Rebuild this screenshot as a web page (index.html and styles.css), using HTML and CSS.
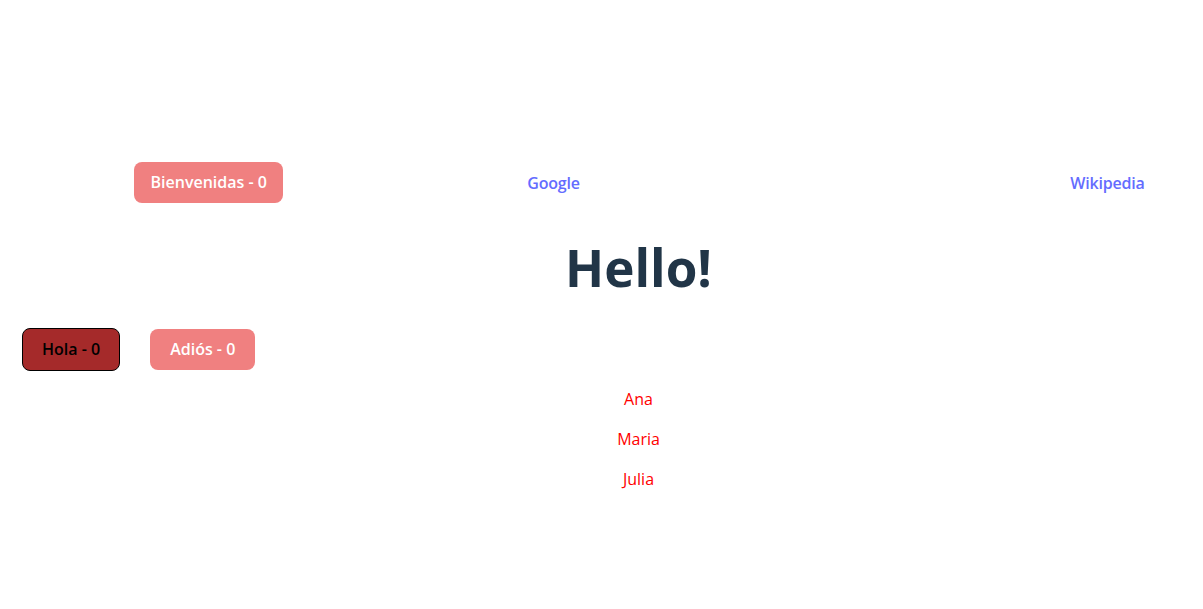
FILE: index.html
```html
<!DOCTYPE html>
<html lang="es">
<head>
<meta charset="utf-8">
<title>Hello</title>
<link rel="stylesheet" href="styles.css">
</head>
<body>
<div class="app">
  <nav class="nav">
    <div class="nav-left"><button class="btn btn-pink btn-wide">Bienvenidas - 0</button></div>
    <a class="nav-link" href="#">Google</a>
    <div class="nav-spacer"></div>
    <a class="nav-link" href="#">Wikipedia</a>
  </nav>
  <h1 class="title">Hello!</h1>
  <div class="actions">
    <button class="btn btn-brown">Hola - 0</button>
    <button class="btn btn-pink">Adiós - 0</button>
  </div>
  <div class="names">
    <p class="name">Ana</p>
    <p class="name">Maria</p>
    <p class="name">Julia</p>
  </div>
</div>
</body>
</html>
```

FILE: styles.css
```css
html, body {
  margin: 0;
  padding: 0;
  background: #ffffff;
}

body {
  font-family: "Open Sans", "Noto Sans", sans-serif;
  font-size: 16px;
  line-height: 1.5;
  color: #213547;
}

.app {
  padding-top: 162px;
}

.nav {
  display: grid;
  grid-template-columns: 134px 359.5px 120px 434px 120px;
  height: 41px;
  align-items: center;
}

.nav-left {
  grid-column: 2;
  display: flex;
}

.nav-link {
  color: #646cff;
  font-weight: 600;
  text-decoration: none;
  text-align: center;
  letter-spacing: -0.2px;
}

.btn {
  font-family: inherit;
  font-size: 16px;
  font-weight: 600;
  line-height: 21px;
  padding: 9px 19px;
  border-radius: 8px;
  border: 1px solid transparent;
  cursor: pointer;
}

.btn-wide {
  padding-left: 15.5px;
  padding-right: 15.5px;
}

.btn-pink {
  background: #f08080;
  color: #ffffff;
}

.btn-brown {
  background: #a52a2a;
  color: #000000;
  border-color: #000000;
  padding-top: 10px;
  padding-bottom: 10px;
}

.title {
  margin: 36px 0 0;
  padding-left: 74px;
  text-align: center;
  font-size: 51.2px;
  line-height: 1.1;
  font-weight: 700;
  color: #213547;
}

.actions {
  display: flex;
  gap: 30px;
  margin-top: 33px;
  padding-left: 22px;
  align-items: center;
}

.names {
  margin-top: 16px;
  padding-left: 74px;
  display: flex;
  flex-direction: column;
  gap: 16px;
  align-items: center;
}

.name {
  margin: 0;
  color: #ff0000;
  line-height: 24px;
}
```
